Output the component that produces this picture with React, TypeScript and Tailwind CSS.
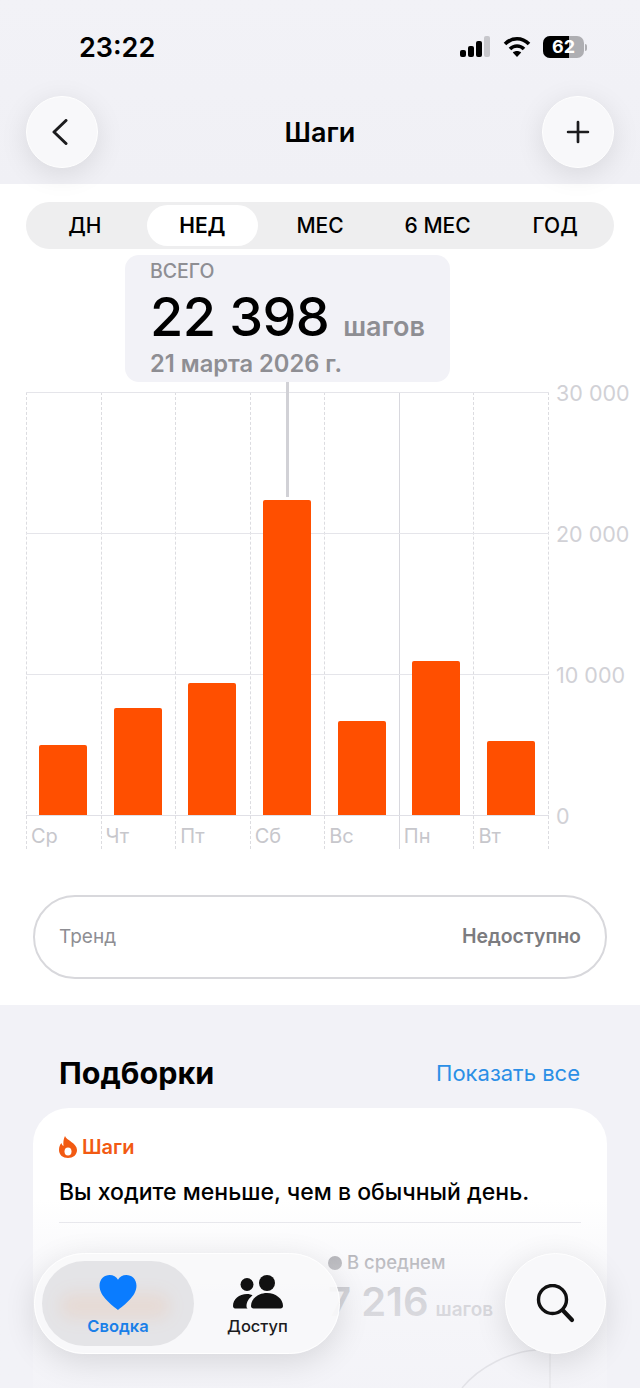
import { Plus } from 'lucide-react';

const days = [
  { label: 'Ср', height: 70 },
  { label: 'Чт', height: 107 },
  { label: 'Пт', height: 132 },
  { label: 'Сб', height: 315 },
  { label: 'Вс', height: 94 },
  { label: 'Пн', height: 154 },
  { label: 'Вт', height: 74 },
];

const ranges = ['ДН', 'НЕД', 'МЕС', '6 МЕС', 'ГОД'];
const ticks = ['30 000', '20 000', '10 000', '0'];

function StatusBar() {
  return (
    <div className="flex justify-between pl-[79px] pr-[53px] pt-[31px] h-[96px] items-start">
      <span className="text-[27px] leading-[34px] font-semibold text-black">23:22</span>
      <div className="flex items-center gap-[11px] mt-[5px]">
        <svg width="32" height="22" viewBox="0 0 32 22" className="-ml-[3px] mr-[1px]">
          <rect x="1" y="14" width="6" height="7" rx="2" fill="#000" />
          <rect x="9" y="10" width="6" height="11" rx="2" fill="#000" />
          <rect x="17" y="5" width="6" height="16" rx="2" fill="#000" />
          <rect x="25" y="0" width="6" height="21" rx="2" fill="#c7c7cc" />
        </svg>
        <svg width="28" height="22" viewBox="0 0 28 22" fill="none" stroke="#000" strokeWidth="3.6" strokeLinecap="butt">
          <path d="M2 8 C9 1 19 1 26 8" />
          <path d="M7 13 C11 9 17 9 21 13" />
          <path d="M14 21 L9.8 16.6 C12 14.6 16 14.6 18.2 16.6 Z" fill="#000" stroke="none" />
        </svg>
        <div className="flex items-center gap-[1px] ml-[1px]">
          <div className="relative w-[41px] h-[22px] rounded-[7px] overflow-hidden bg-[#aeaeb2] flex items-center justify-center">
            <div className="absolute left-0 top-0 bottom-0 w-[26px] bg-black" />
            <span className="relative text-[18px] leading-none font-bold text-white">62</span>
          </div>
          <div className="w-[2px] h-[7px] rounded-r-full bg-[#aeaeb2]" />
        </div>
      </div>
    </div>
  );
}

function RoundButton({ children }: { children: React.ReactNode }) {
  return (
    <div className="w-[72px] h-[72px] rounded-full bg-[#f8f8fa] border border-white flex items-center justify-center shadow-[0_6px_28px_rgba(0,0,0,0.1)]">
      {children}
    </div>
  );
}

function Chart() {
  return (
    <div className="relative mt-[10px] ml-[26px] flex">
      <div className="relative w-[523px] h-[457px]">
        {/* линии сетки */}
        <div className="absolute left-0 right-0 top-0 border-t border-[#e5e5ea]" />
        <div className="absolute left-0 right-0 top-[141px] border-t border-[#e5e5ea]" />
        <div className="absolute left-0 right-0 top-[282px] border-t border-[#e5e5ea]" />
        <div className="absolute left-0 right-0 top-[423px] border-t border-[#e0e0e6]" />
        <div className="absolute left-[260px] top-[-10px] h-[115px] w-[3px] bg-[#d1d1d6]" />
        <div className="grid grid-cols-7 h-full border-r border-dashed border-[#dcdce0]">
          {days.map((day) => (
            <div
              key={day.label}
              className={`flex flex-col border-l ${day.label === 'Пн' ? 'border-solid border-[#d8d8de]' : 'border-dashed border-[#dcdce0]'}`}
            >
              <div className="h-[423px] flex items-end justify-center pr-[1px]">
                <div className="relative w-[48px] rounded-t-[2px] bg-[#ff4f00]" style={{ height: day.height }} />
              </div>
              <span className="pl-[4px] pt-[8px] text-[20px] leading-[26px] text-[#c7c7cc]">{day.label}</span>
            </div>
          ))}
        </div>
      </div>
      <div className="ml-[7px] h-[423px] flex flex-col justify-between mt-[1px]">
        {ticks.map((tick) => (
          <span key={tick} className="h-0 flex items-center text-[21.500px] text-[#d1d1d6] whitespace-nowrap">{tick}</span>
        ))}
      </div>
    </div>
  );
}

function TabBar() {
  return (
    <div className="absolute left-[34px] right-[34px] top-[1253px] flex justify-between">
      <div className="relative w-[306px] h-[101px] rounded-full p-[7px] bg-[#f8f8fa]/90 border border-white flex overflow-hidden shadow-[0_8px_32px_rgba(0,0,0,0.12)]">
        <div className="relative w-[152px] rounded-full bg-[#e4e4e7] flex flex-col items-center pt-[14px] overflow-hidden">
          {/* просвет контента под стеклом */}
          <div className="absolute left-[18px] top-[32px] w-[110px] h-[26px] rounded-full bg-[#ff8a3c]/10 blur-[8px]" />
          <svg width="38" height="35" viewBox="0 0 38 36" className="relative">
            <path d="M19 36 C13 31 0 22 0 11 C0 4 5 0 10.5 0 C14 0 17.500 2 19 5 C20.500 2 24 0 27.500 0 C33 0 38 4 38 11 C38 22 25 31 19 36 Z" fill="#0a7cff" />
          </svg>
          <span className="relative mt-[5px] text-[16.500px] leading-[22px] font-semibold text-[#1a7fe8]">Сводка</span>
        </div>
        <div className="flex-1 flex flex-col items-center pt-[14px] -ml-[11px]">
          <svg width="50" height="35" viewBox="0 0 50 35" fill="#111">
            <circle cx="14" cy="9.500" r="6.500" />
            <circle cx="34" cy="8" r="8" />
            <path d="M0 31 C0 24 6 19 14 19 C16.500 19 18 19.500 19.500 20.500 C16 23 13.500 27 13.500 31 C13.500 32.500 14 33 14.500 33.500 L2 33.500 C1 33.500 0 32.500 0 31 Z" />
            <path d="M18 31 C18 24 25 18 34 18 C43 18 50 24 50 31 C50 32.500 49 33.500 47.500 33.500 L20.500 33.500 C19 33.500 18 32.500 18 31 Z" />
          </svg>
          <span className="mt-[5px] text-[16.500px] leading-[22px] font-medium text-[#1c1c1e]">Доступ</span>
        </div>
      </div>
      <div className="w-[101px] h-[101px] rounded-full bg-[#f8f8fa] border border-white flex items-center justify-center shadow-[0_8px_32px_rgba(0,0,0,0.12)]">
        <svg width="40" height="40" viewBox="0 0 40 40" fill="none" stroke="#111" strokeWidth="3.400" strokeLinecap="round">
          <circle cx="16.500" cy="15.500" r="14" />
          <path d="M27 26.500 L36 36" strokeWidth="4.200" />
        </svg>
      </div>
    </div>
  );
}

export default function App() {
  return (
    <div className="relative w-[640px] h-[1388px] overflow-hidden bg-[#f2f2f7] font-['Inter',sans-serif] text-black">
      {/* Шапка */}
      <div className="h-[184px] bg-gradient-to-b from-[#f2f2f7] to-[#f0f0f5]">
        <StatusBar />
        <div className="flex items-center justify-between px-[26px]">
          <RoundButton>
            <svg width="16" height="26" viewBox="0 0 16 26" fill="none" stroke="#1c1c1e" strokeWidth="3" strokeLinecap="round" strokeLinejoin="round" className="-ml-[4px]">
              <path d="M14 1.500 L2 13 L14 24.500" />
            </svg>
          </RoundButton>
          <span className="text-[27px] font-semibold pt-[2px]">Шаги</span>
          <RoundButton>
            <Plus size={34} strokeWidth={1.9} className="text-[#1c1c1e]" />
          </RoundButton>
        </div>
      </div>

      {/* График */}
      <div className="h-[821px] bg-white pt-[18px]">
        <div className="mx-[26px] h-[47px] rounded-full bg-[#eeeeef] py-[3px] grid grid-cols-5">
          {ranges.map((range) => (
            <div
              key={range}
              className={`flex items-center justify-center rounded-full text-[21px] ${range === 'НЕД' ? 'bg-white font-semibold mx-[3px]' : 'font-medium'}`}
            >
              {range}
            </div>
          ))}
        </div>

        <div className="ml-[125px] mt-[6px] w-[325px] h-[127px] rounded-[14px] bg-[#f2f2f7] pl-[25px] pt-[4px]">
          <div className="text-[19.500px] leading-[24px] font-medium text-[#8e8e93]">ВСЕГО</div>
          <div className="flex items-baseline gap-[14px] mt-[2px]">
            <span className="text-[54px] leading-[64px] font-medium tracking-[-0.6px]">22 398</span>
            <span className="text-[27px] font-semibold text-[#8e8e93]">шагов</span>
          </div>
          <div className="text-[23.700px] leading-[30px] font-semibold text-[#8e8e93]">21 марта 2026 г.</div>
        </div>

        <Chart />

        <div className="mx-[33px] mt-[46px] h-[84px] rounded-full border-2 border-[#d8d8dc] flex items-center justify-between px-[24px]">
          <span className="text-[19px] text-[#8e8e93]">Тренд</span>
          <span className="text-[19.500px] font-semibold text-[#7c7c80]">Недоступно</span>
        </div>
      </div>

      {/* Подборки */}
      <div className="pt-[47px]">
        <div className="flex items-center justify-between px-[59px] h-[42px]">
          <span className="text-[30.500px] font-bold">Подборки</span>
          <span className="text-[22px] text-[#2b8fe6] pr-[1px]">Показать все</span>
        </div>
        <div className="relative mx-[33px] mt-[14px] h-[320px] rounded-[36px] bg-white px-[26px] pt-[26px]">
          <div className="flex items-center gap-[5px]">
            <svg width="18" height="22" viewBox="0 0 18 22">
              <path d="M6 0 C7 4 18 7 18 14 C18 19 14 22 9 22 C4 22 0 19 0 14 C0 11 1 8.500 2.500 7 C2.800 8.500 3.500 9.500 4.500 10 C4 6 4.500 3 6 0 Z" fill="#f25a12" />
              <ellipse cx="9" cy="15.500" rx="3.500" ry="4" fill="#fff" />
            </svg>
            <span className="text-[20px] leading-[26px] font-semibold text-[#f25a12]">Шаги</span>
          </div>
          <div className="mt-[17px] text-[23px] leading-[30px] font-medium">Вы ходите меньше, чем в обычный день.</div>
          <div className="mt-[15px] border-t border-[#e5e5ea]" />
          <div className="ml-[269px] mt-[26px]">
            <div className="flex items-center gap-[5px]">
              <span className="w-[14px] h-[14px] rounded-full bg-[#8e8e93]" />
              <span className="text-[18.500px] font-medium text-[#8e8e93]">В среднем</span>
            </div>
            <div className="flex items-baseline gap-[7px]">
              <span className="text-[40px] leading-[50px] font-semibold text-[#8e8e93]">7 216</span>
              <span className="text-[19px] font-semibold text-[#8e8e93]">шагов</span>
            </div>
          </div>
        </div>
      </div>

      {/* Затухание под панелью */}
      <div className="absolute left-0 right-0 bottom-0 h-[188px] bg-gradient-to-b from-[#f2f2f7]/0 via-[#f2f2f7]/70 to-[#f2f2f7]/90" />
      <svg width="640" height="40" viewBox="0 0 640 40" fill="none" stroke="#e2e2e7" strokeWidth="1.500" className="absolute left-0 bottom-0">
        <path d="M462 40 C480 18 510 4 536 2" />
        <path d="M550 4 L550 40" stroke="#e8e8ec" />
      </svg>
      <TabBar />
    </div>
  );
}
